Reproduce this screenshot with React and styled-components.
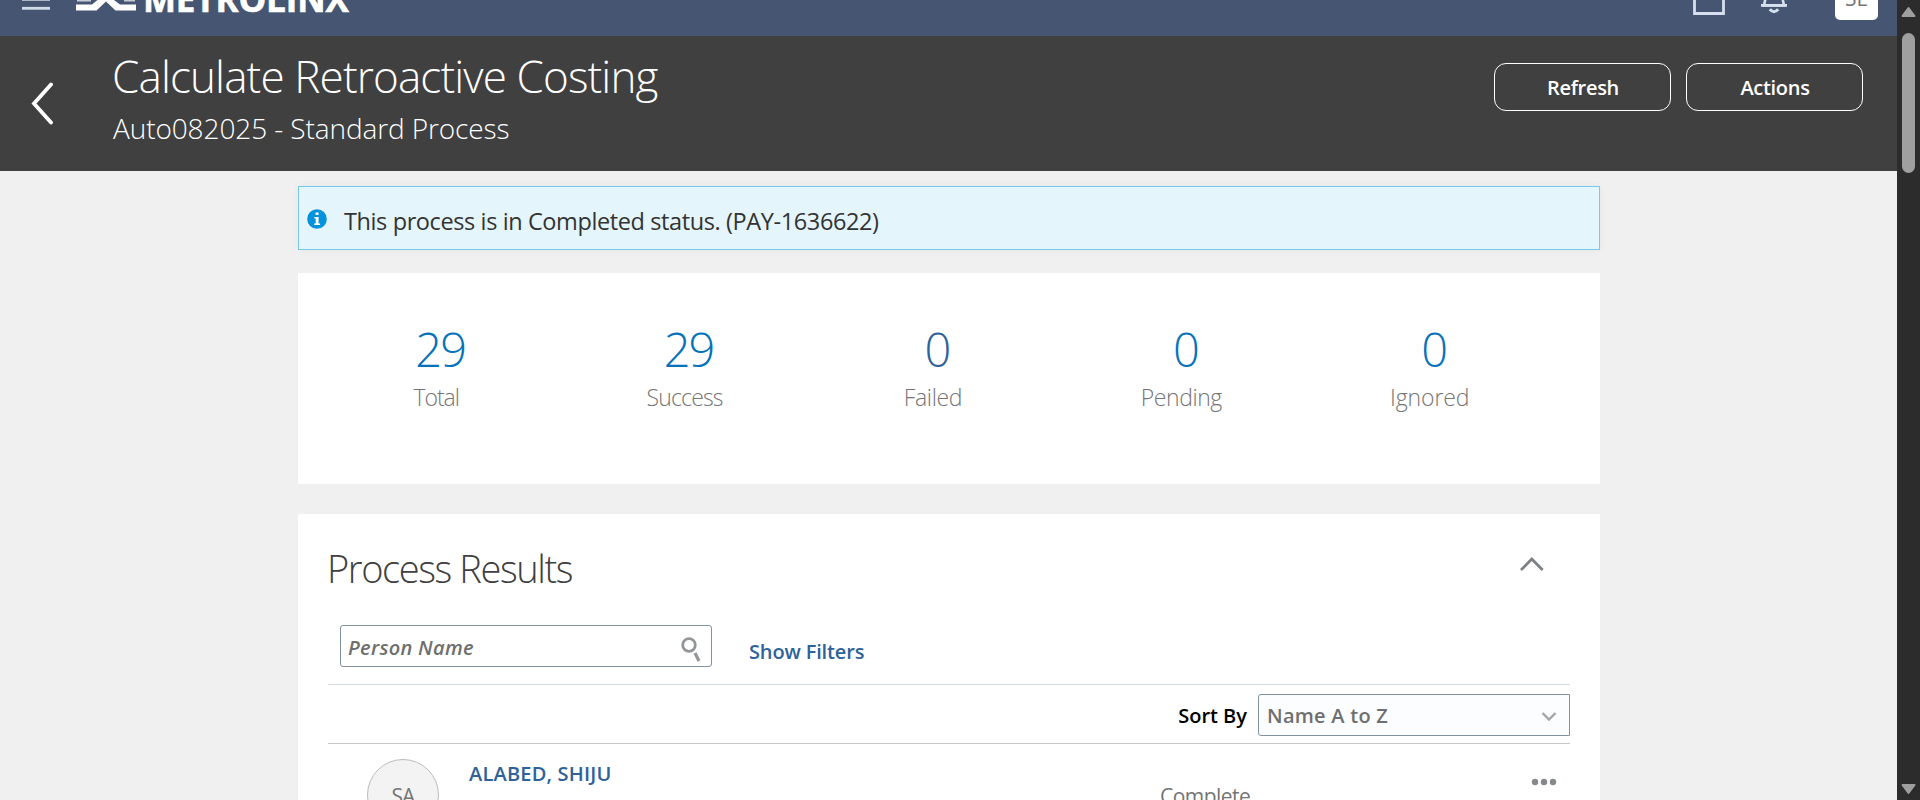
import React from "react";
import styled, { createGlobalStyle } from "styled-components";

const GlobalStyle = createGlobalStyle`
  * { box-sizing: border-box; }
  body { margin: 0; background: #f0f0f0; font-family: "Open Sans", "Noto Sans", sans-serif; }
  svg { display: block; flex: none; }
`;

const Frame = styled.div`
  display: flex;
  width: 1920px;
  height: 800px;
  overflow: hidden;
`;

const Page = styled.div`
  width: 1897px;
  height: 800px;
  overflow: hidden;
  background: #f0f0f0;
`;

/* Top application bar, scrolled partly out of view */
const TopBar = styled.header`
  height: 36px;
  overflow: hidden;
  display: flex;
  align-items: flex-start;
  background: #465672;
`;

const Brand = styled.div`
  display: flex;
  flex: 1;
  gap: 26px;
  padding-left: 22px;
`;

const BrandName = styled.span`
  margin: -24px 0 0 -19px;
  height: 48px;
  line-height: 45px;
  color: #fff;
  font-size: 35px;
  font-weight: 700;
  letter-spacing: -0.15px;
  -webkit-text-stroke: 0.6px #fff;
`;

const TopActions = styled.div`
  display: flex;
  gap: 36px;
  padding-right: 19px;
`;

const UserBadge = styled.div`
  width: 43px;
  height: 42px;
  margin: -22px 0 0 12px;
  border-radius: 5px;
  background: #fff;
  color: #777;
  font-size: 21px;
  line-height: 41px;
  text-align: center;
`;

/* Page header */
const Header = styled.section`
  display: flex;
  height: 135px;
  padding: 15px 34px 0 31px;
  background: #404040;
  color: #fff;
`;

const BackButton = styled.button`
  width: 82px;
  height: 44px;
  margin-top: 31px;
  padding: 0;
  border: 0;
  background: none;
  text-align: left;
`;

const Heading = styled.div`
  flex: 1;
`;

const Title = styled.h1`
  margin: 0 0 10px -1px;
  font-size: 44px;
  font-weight: 300;
  line-height: 50px;
  letter-spacing: -0.87px;
`;

const Subtitle = styled.h2`
  margin: 0;
  font-size: 28px;
  font-weight: 300;
  line-height: 35px;
  letter-spacing: -0.1px;
`;

const HeaderActions = styled.div`
  display: flex;
  gap: 15px;
  padding-top: 12px;
`;

const HeaderButton = styled.button`
  width: 177px;
  height: 48px;
  padding: 0 0 0 1px;
  border: 1px solid #fff;
  border-radius: 12px;
  background: none;
  color: #fff;
  font: 600 20px "Open Sans", sans-serif;
  letter-spacing: -0.3px;
`;

const Content = styled.main`
  width: 1302px;
  margin-left: 298px;
  padding-top: 15px;
`;

const Notice = styled.div`
  display: flex;
  gap: 17px;
  height: 64px;
  padding: 22px 8px 0;
  border: 1px solid #77c9ec;
  background: #e4f5fc;
  color: #333;
  font-size: 23.5px;
  line-height: 24px;
  letter-spacing: -0.39px;
  box-shadow: 0 0 8px rgba(0, 0, 0, 0.05);
`;

const Summary = styled.section`
  display: grid;
  grid-template-columns: repeat(5, 248.4px);
  height: 211px;
  margin-top: 23px;
  padding: 51px 0 0 14px;
  background: #fff;
`;

const Stat = styled.div`
  text-align: center;
`;

const StatValue = styled.div`
  padding-left: 8px;
  color: ${(p) => (p.$muted ? "#2f6299" : "#0572ba")};
  font-size: 47px;
  font-weight: 300;
  line-height: 50px;
  letter-spacing: -2px;
`;

const StatLabel = styled.div`
  margin-top: 8px;
  color: #757575;
  font-size: 23px;
  font-weight: 300;
  line-height: 30px;
  letter-spacing: ${(p) => p.$tracking}px;
`;

const Results = styled.section`
  height: 400px;
  margin-top: 30px;
  padding: 32px 30px 0;
  background: #fff;
`;

const ResultsHeader = styled.div`
  display: flex;
  justify-content: space-between;
  padding-right: 25px;
`;

const ResultsTitle = styled.h2`
  margin: 0 0 0 -1px;
  color: #404040;
  font-size: 38px;
  font-weight: 300;
  line-height: 44px;
  letter-spacing: -1.4px;
`;

const CollapseIcon = styled.svg`
  margin-top: 10px;
`;

const FilterBar = styled.div`
  display: flex;
  height: 95px;
  padding: 35px 0 0 12px;
  border-bottom: 1px solid #d3dce4;
`;

const SearchField = styled.div`
  display: flex;
  justify-content: space-between;
  width: 372px;
  height: 42px;
  padding: 2px 10px 0 7px;
  border: 1px solid #80939f;
  border-radius: 3px;
  color: #6f6f6f;
  font-size: 20px;
  font-style: italic;
  font-weight: 600;
  line-height: 40px;
  letter-spacing: 0.3px;
`;

const SearchIcon = styled.svg`
  margin-top: 8px;
`;

const FilterLink = styled.a`
  margin-left: 37px;
  color: #2f6299;
  font-size: 20px;
  font-weight: 600;
  line-height: 54px;
  letter-spacing: -0.15px;
`;

const SortBar = styled.div`
  display: flex;
  justify-content: flex-end;
  height: 59px;
  padding-top: 9px;
  border-bottom: 1px solid #c8c8c8;
`;

const SortLabel = styled.label`
  margin-right: 11px;
  color: #000;
  font-size: 20px;
  font-weight: 600;
  line-height: 44px;
`;

const SortSelect = styled.div`
  display: flex;
  justify-content: space-between;
  width: 312px;
  height: 42px;
  padding: 0 12px 0 8px;
  border: 1px solid #80939f;
  border-radius: 3px 0 0 3px;
  background: #fbfdff;
  color: #6f6f6f;
  font-size: 20px;
  font-weight: 600;
  line-height: 42px;
  letter-spacing: 0.25px;
`;

const SelectArrow = styled.svg`
  margin-top: 16px;
`;

const ResultRow = styled.div`
  display: flex;
  height: 100px;
  padding: 15px 13px 0 39px;
`;

const Avatar = styled.div`
  width: 72px;
  height: 72px;
  border: 1px solid #bcbcbc;
  border-radius: 50%;
  background: #f3f3f3;
  color: #757575;
  font-size: 21px;
  line-height: 72px;
  letter-spacing: -1px;
  text-align: center;
`;

const PersonLink = styled.a`
  width: 691px;
  margin-left: 30px;
  color: #2f6299;
  font-size: 20px;
  font-weight: 600;
  line-height: 30px;
  letter-spacing: 0.2px;
`;

const Status = styled.span`
  flex: 1;
  padding-top: 22px;
  color: #757575;
  font-size: 21px;
  line-height: 30px;
  letter-spacing: -0.55px;
`;

const MoreIcon = styled.svg`
  margin-top: 18px;
`;

/* Window scrollbar */
const ScrollTrack = styled.div`
  display: flex;
  flex-direction: column;
  justify-content: space-between;
  width: 23px;
  height: 800px;
  padding: 6px 0 4px 4px;
  background: #2c2c2c;
`;

const ScrollThumb = styled.div`
  width: 13px;
  height: 140px;
  margin: 15px 0 auto 1px;
  border-radius: 7px;
  background: #9f9f9f;
`;

const STATS = [
  { label: "Total", value: 29, tracking: -1 },
  { label: "Success", value: 29, tracking: -0.83 },
  { label: "Failed", value: 0, tracking: -0.36, muted: true },
  { label: "Pending", value: 0, tracking: -0.44 },
  { label: "Ignored", value: 0, tracking: -0.1 },
];

function MenuIcon() {
  return (
    <svg width="28" height="12" viewBox="0 0 28 12">
      <path d="M0 0h28" stroke="#a9b6ca" strokeWidth="2" />
      <path d="M0 8.300h28" stroke="#d3dcea" strokeWidth="2.800" />
    </svg>
  );
}

function LogoMark() {
  return (
    <svg width="60" height="12" viewBox="0 0 60 12">
      <path d="M0 4.600h16L21.500 0H38l6 4.600h16v6H39.500L30 1.500l-9.500 9.100H0Z" fill="#fff" />
      <path d="M1 .700h14M48 .700h11" stroke="#fff" strokeWidth="1.800" opacity=".7" />
    </svg>
  );
}

export default function App() {
  return (
    <>
      <GlobalStyle />
      <Frame>
        <Page>
          <TopBar>
            <Brand>
              <MenuIcon />
              <LogoMark />
              <BrandName>METROLINX</BrandName>
            </Brand>
            <TopActions>
              <svg width="32" height="16" viewBox="0 0 32 16">
                <path d="M1.500-4v17.500h29V-4" fill="none" stroke="#d6dfed" strokeWidth="2.800" />
              </svg>
              <svg width="26" height="16" viewBox="0 0 26 16">
                <path d="M5-4 3 5.500h20L21-4" fill="none" stroke="#d6dfed" strokeWidth="2.600" />
                <path d="M0 5.400h26" stroke="#d6dfed" strokeWidth="2.800" />
                <path d="M8.800 9.300q4.200 4.800 8.400 0" fill="none" stroke="#d6dfed" strokeWidth="3" />
              </svg>
              <UserBadge>SE</UserBadge>
            </TopActions>
          </TopBar>

          <Header>
            <BackButton aria-label="Back">
              <svg width="22" height="44" viewBox="0 0 22 44">
                <path d="M20 2.500 3 21.500l17 19" fill="none" stroke="#fff" strokeWidth="3.800" strokeLinecap="round" />
              </svg>
            </BackButton>
            <Heading>
              <Title>Calculate Retroactive Costing</Title>
              <Subtitle>Auto082025 - Standard Process</Subtitle>
            </Heading>
            <HeaderActions>
              <HeaderButton>Refresh</HeaderButton>
              <HeaderButton>Actions</HeaderButton>
            </HeaderActions>
          </Header>

          <Content>
            <Notice>
              <svg width="20" height="20" viewBox="0 0 20 20">
                <circle cx="10" cy="10" r="9.800" fill="#0392dc" />
                <path d="M8.600 3.500h3v2.600h-3ZM7.300 8h4.300v6.500h1.500V16H7.200v-1.500h1.500V9.500H7.300Z" fill="#fff" />
              </svg>
              <span>This process is in Completed status. (PAY-1636622)</span>
            </Notice>

            <Summary>
              {STATS.map((s) => (
                <Stat key={s.label}>
                  <StatValue $muted={s.muted}>{s.value}</StatValue>
                  <StatLabel $tracking={s.tracking}>{s.label}</StatLabel>
                </Stat>
              ))}
            </Summary>

            <Results>
              <ResultsHeader>
                <ResultsTitle>Process Results</ResultsTitle>
                <CollapseIcon width="26" height="16" viewBox="0 0 26 16">
                  <path d="M2 14 12.800 3l10.800 11" fill="none" stroke="#7d8084" strokeWidth="2.800" />
                </CollapseIcon>
              </ResultsHeader>
              <FilterBar>
                <SearchField>
                  <span>Person Name</span>
                  <SearchIcon width="20" height="26" viewBox="0 0 20 26">
                    <circle cx="8" cy="9" r="6.300" fill="none" stroke="#939699" strokeWidth="2.800" />
                    <path d="m14 17 4 8" stroke="#939699" strokeWidth="3.200" />
                  </SearchIcon>
                </SearchField>
                <FilterLink>Show Filters</FilterLink>
              </FilterBar>
              <SortBar>
                <SortLabel>Sort By</SortLabel>
                <SortSelect>
                  <span>Name A to Z</span>
                  <SelectArrow width="16" height="11" viewBox="0 0 16 11">
                    <path d="m1.500 2 6.500 6.500L14.500 2" fill="none" stroke="#a3a6a8" strokeWidth="2.400" />
                  </SelectArrow>
                </SortSelect>
              </SortBar>
              <ResultRow>
                <Avatar>SA</Avatar>
                <PersonLink>ALABED, SHIJU</PersonLink>
                <Status>Complete</Status>
                <MoreIcon width="26" height="10" viewBox="0 0 26 10">
                  <g fill="#86898c">
                    <circle cx="4" cy="5" r="3.200" />
                    <circle cx="13" cy="5" r="3.200" />
                    <circle cx="22" cy="5" r="3.200" />
                  </g>
                </MoreIcon>
              </ResultRow>
            </Results>
          </Content>
        </Page>

        <ScrollTrack>
          <svg width="15" height="12" viewBox="0 0 15 12">
            <path d="M7.500 2 13.500 10H1.500Z" fill="#9f9f9f" stroke="#9f9f9f" strokeWidth="2" strokeLinejoin="round" />
          </svg>
          <ScrollThumb />
          <svg width="15" height="13" viewBox="0 0 15 13">
            <path d="M1.500 2h12l-6 8Z" fill="#9f9f9f" stroke="#9f9f9f" strokeWidth="2" strokeLinejoin="round" />
          </svg>
        </ScrollTrack>
      </Frame>
    </>
  );
}
